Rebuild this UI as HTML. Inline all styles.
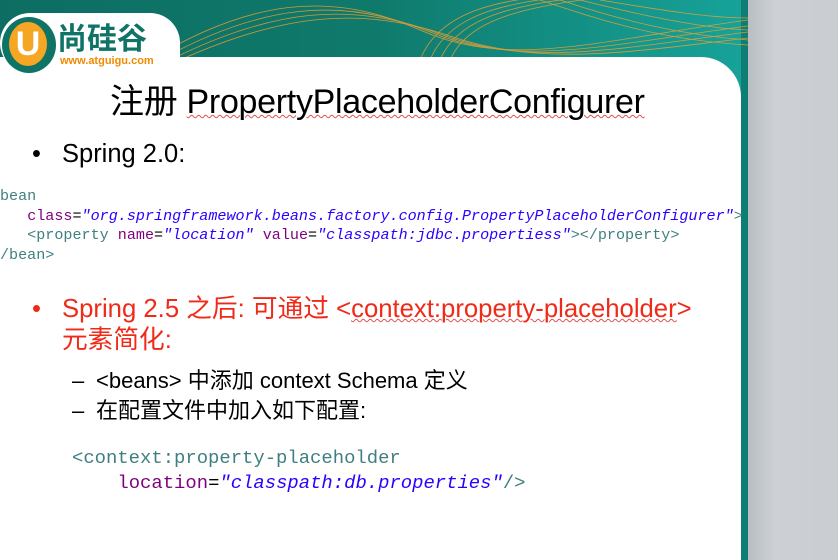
<!DOCTYPE html>
<html><head><meta charset="utf-8"><style>
body{margin:0;width:838px;height:560px;overflow:hidden;position:relative;background:#fff;font-family:"Liberation Sans","Noto Sans CJK SC",sans-serif}
.grey{position:absolute;left:748px;top:0;width:90px;height:560px;background:linear-gradient(90deg,#b9bec3,#cdd1d5 30%,#c9cdd1)}
.edge{position:absolute;left:741px;top:0;width:7px;height:560px;background:#0e7e74}
.hdr{position:absolute;left:0;top:0;width:748px;height:100px;background:linear-gradient(90deg,#0d6d62,#0f7a6c 50%,#17a39a)}
.card{position:absolute;left:0;top:57px;width:741px;height:503px;background:#fff;border-top-right-radius:40px}
.t{position:absolute;white-space:nowrap}
.code{font-family:"Liberation Mono","DejaVu Sans Mono",monospace}
.tg{color:#3f7f7f}.at{color:#7f007f}.st{color:#2a00ff;font-style:italic}
</style></head><body>
<div class="grey"></div>
<div class="hdr"></div>
<div class="edge"></div>
<svg style="position:absolute;left:0;top:0" width="748" height="60">
<g fill="none" stroke="#f0a030" stroke-width="0.8" opacity="0.85">
<path d="M150 60 C250 0 330 -10 420 30 S600 40 748 20"/>
<path d="M160 60 C260 5 340 -5 430 32 S610 44 748 26"/>
<path d="M170 60 C270 10 350 0 440 34 S620 48 748 32"/>
<path d="M180 60 C280 15 360 5 450 36 S630 52 748 38"/>
<path d="M420 60 C440 10 500 0 560 -5"/><path d="M430 60 C450 12 510 2 580 -5"/>
<path d="M440 60 C460 14 520 4 600 -5"/><path d="M450 60 C470 16 530 6 620 -5"/>
<path d="M540 0 C600 20 660 40 748 45"/><path d="M560 0 C620 20 680 35 748 40"/>
<path d="M580 0 C640 15 700 28 748 30"/><path d="M600 0 C660 10 710 18 748 18"/>
</g></svg>
<div class="card"></div>
<div style="position:absolute;left:0;top:13px;width:180px;height:60px;background:#fff;border-radius:30px 30px 0 30px"></div>
<div style="position:absolute;left:2px;top:17px;width:54px;height:56px;border-radius:50%;background:#0f7366"></div>
<div style="position:absolute;left:9px;top:22px;width:38px;height:44px;border-radius:50%;background:#f5a623;color:#fff;font:bold 34px 'Liberation Sans',sans-serif;text-align:center;line-height:44px">U</div>
<div class="t" style="left:57px;top:23px;font-size:30px;font-weight:bold;color:#0f7366;line-height:34px">尚硅谷</div>
<div class="t" style="left:60px;top:55px;font-size:11px;font-weight:bold;color:#f08a00">www.atguigu.com</div>
<div class="t" style="left:110px;top:74px;font-size:34px;letter-spacing:-0.3px;color:#000">注册 <span style="text-decoration:underline wavy #e05050;text-decoration-thickness:1px">PropertyPlaceholderConfigurer</span></div>
<div class="t" style="left:32px;top:140px;font-size:25.5px;color:#000"><span style="display:inline-block;width:30px">•</span>Spring 2.0:</div>
<div class="t code" style="left:0;top:187px;font-size:15.1px;line-height:19.5px">
<div class="tg">bean</div>
<div>&nbsp;&nbsp;&nbsp;<span class="at">class</span>=<span class="st">"org.springframework.beans.factory.config.PropertyPlaceholderConfigurer"</span><span class="tg">&gt;</span></div>
<div>&nbsp;&nbsp;&nbsp;<span class="tg">&lt;property</span> <span class="at">name</span>=<span class="st">"location"</span> <span class="at">value</span>=<span class="st">"classpath:jdbc.propertiess"</span><span class="tg">&gt;&lt;/property&gt;</span></div>
<div class="tg">/bean&gt;</div></div>
<div class="t" style="left:32px;top:294px;font-size:25.7px;color:#f02a18;line-height:31px"><span style="display:inline-block;width:30px">•</span>Spring 2.5 之后: 可通过 &lt;<span style="text-decoration:underline wavy #e05050;text-decoration-thickness:1px">context:property-placeholder</span>&gt;<br><span style="display:inline-block;width:30px"></span>元素简化:</div>
<div class="t" style="left:72px;top:366px;font-size:22px;color:#000;line-height:30px"><span style="display:inline-block;width:24px">–</span>&lt;beans&gt; 中添加 context Schema 定义<br><span style="display:inline-block;width:24px">–</span>在配置文件中加入如下配置:</div>
<div class="t code" style="left:72px;top:446px;font-size:18.9px;line-height:25px">
<div class="tg">&lt;context:property-placeholder</div>
<div>&nbsp;&nbsp;&nbsp;&nbsp;<span class="at">location</span>=<span class="st">"classpath:db.properties"</span><span class="tg">/&gt;</span></div></div>
</body></html>
